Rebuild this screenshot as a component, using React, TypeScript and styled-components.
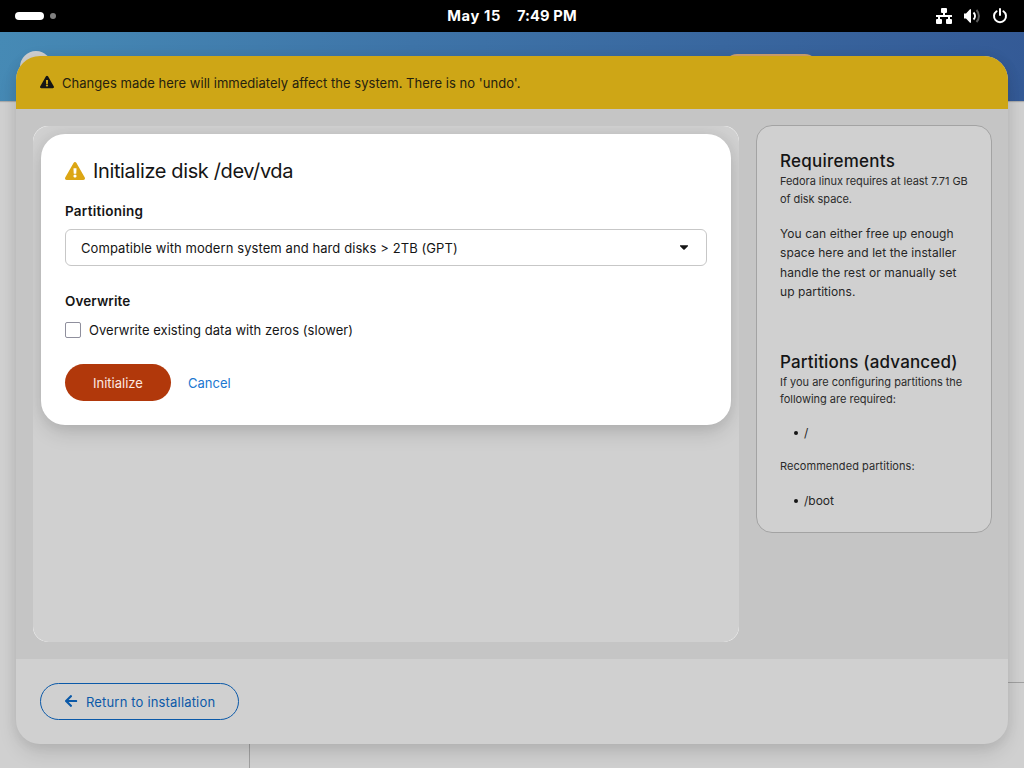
import React from "react";
import styled, { createGlobalStyle } from "styled-components";
import { FaArrowLeft, FaCaretDown, FaExclamationTriangle } from "react-icons/fa";

const GlobalStyle = createGlobalStyle`
  *, *::before, *::after { box-sizing: border-box; }
  body { margin: 0; background: #000; color: #151515; font-family: Inter, "Liberation Sans", sans-serif; font-size: 13px; }
  h1, h2, h3, p, ul { margin: 0; padding: 0; font-weight: 400; }
  button { font: inherit; cursor: pointer; }
  svg { display: block; flex: none; }
`;

const Screen = styled.div`
  width: 1024px;
  height: 768px;
  display: flex;
  flex-direction: column;
  overflow: hidden;
`;

const TopBar = styled.header`
  height: 32px;
  flex: none;
  display: grid;
  grid-template-columns: 1fr auto 1fr;
  align-items: center;
  padding: 0 16px 0 15px;
  background: #000;
  color: #fff;
`;

const Workspaces = styled.div`
  display: flex;
  align-items: center;
  gap: 6px;
`;

const ActiveSpace = styled.span`
  width: 29px;
  height: 8px;
  border-radius: 4px;
  background: #fff;
`;

const IdleSpace = styled.span`
  width: 6px;
  height: 6px;
  border-radius: 50%;
  background: #808080;
`;

const Clock = styled.div`
  display: flex;
  gap: 16px;
  padding: 0 0 1px 1px;
  font-size: 14.7px;
  font-weight: 700;
  white-space: nowrap;
`;

const ClockPart = styled.span<{ $spacing: number }>`
  letter-spacing: ${(p) => p.$spacing}px;
`;

const Tray = styled.div`
  display: flex;
  justify-content: flex-end;
  align-items: center;
  gap: 12px;
`;

const Desktop = styled.div`
  position: relative;
  flex: 1;
  display: flex;
  flex-direction: column;
  background: #d0d0d0;
`;

const AppHeader = styled.div`
  height: 69px;
  flex: none;
  display: flex;
  align-items: flex-start;
  justify-content: space-between;
  padding: 19px 206px 0 20px;
  background: linear-gradient(100deg, #468ab5 0%, #3e74a8 40%, #345a96 100%);
  box-shadow: 0 1px 1px #aaa;
`;

const LogoDisc = styled.div`
  width: 32px;
  height: 32px;
  border-radius: 50%;
  background: #d0d0d0;
`;

const BetaPill = styled.div`
  width: 94px;
  height: 26px;
  margin-top: 3px;
  border-radius: 13px;
  background: #cfa16e;
`;

const Wizard = styled.div`
  flex: 1;
  display: grid;
  grid-template-columns: 250px 1fr;
`;

const WizardNav = styled.div`
  border-right: 1px solid #a0a0a0;
`;

const WizardMain = styled.div`
  display: flex;
  flex-direction: column;
  justify-content: flex-end;
`;

const WizardFooter = styled.div`
  height: 86px;
  border-top: 1px solid #a0a0a0;
`;

const ModalLayer = styled.div`
  position: absolute;
  inset: 0;
  padding: 24px 16px;
  display: flex;
`;

const Modal = styled.section`
  flex: 1;
  display: flex;
  flex-direction: column;
  overflow: hidden;
  border-radius: 24px;
  background: #d0d0d0;
  box-shadow: 0 10px 20px -2px rgba(0, 0, 0, 0.13), 0 0 14px rgba(0, 0, 0, 0.07);
`;

const Banner = styled.div`
  height: 53px;
  flex: none;
  display: flex;
  align-items: center;
  gap: 8px;
  padding: 0 24px;
  background: #cea616;
  svg { margin-bottom: 1px; }
`;

const BannerText = styled.p`
  padding-top: 1px;
  color: #25210f;
  letter-spacing: 0.03px;
  white-space: nowrap;
`;

const ModalBody = styled.div`
  height: 550px;
  display: grid;
  grid-template-columns: 706px 236px;
  gap: 17px;
  align-items: start;
  padding: 16px 16px 0 17px;
  background: #c5c5c5;
`;

const StoragePanel = styled.main`
  height: 516px;
  margin-top: 1px;
  display: flex;
  border-radius: 15px;
  background: #f4f4f4;
  overflow: hidden;
`;

const PanelContent = styled.div`
  flex: 1;
  padding: 8px;
  border-radius: 16px;
  background: #d0d0d0;
`;

const Dialog = styled.section`
  height: 291px;
  display: flex;
  flex-direction: column;
  align-items: stretch;
  padding: 23px 24px 24px;
  border-radius: 24px;
  background: #fff;
  box-shadow: 0 10px 20px -2px rgba(0, 0, 0, 0.13), 0 0 14px rgba(0, 0, 0, 0.08);
`;

const DialogTitle = styled.div`
  height: 28px;
  display: flex;
  align-items: center;
  gap: 8px;
  h1 { font-size: 20px; line-height: 28px; letter-spacing: -0.37px; white-space: nowrap; }
`;

const FieldLabel = styled.div<{ $top: number; $spacing: number }>`
  margin-top: ${(p) => p.$top}px;
  line-height: 20px;
  font-size: 13.5px;
  font-weight: 600;
  letter-spacing: ${(p) => p.$spacing}px;
`;

const Select = styled.button`
  height: 37px;
  flex: none;
  display: flex;
  align-items: center;
  justify-content: space-between;
  margin-top: 8px;
  padding: 0 15px;
  border: 1px solid #c7c7c7;
  border-radius: 6px;
  background: #fff;
  color: #151515;
  letter-spacing: 0.08px;
  svg { margin-bottom: 1px; }
`;

const CheckRow = styled.label`
  display: flex;
  align-items: center;
  gap: 8px;
  height: 20px;
  margin-top: 9px;
  letter-spacing: 0.04px;
  white-space: nowrap;
`;

const CheckBox = styled.input`
  appearance: none;
  width: 16px;
  height: 16px;
  margin: 0;
  border: 1px solid #8f8f9d;
  border-radius: 2px;
  background: #fff;
`;

const Actions = styled.div`
  display: flex;
  gap: 17px;
  margin-top: auto;
`;

const DangerButton = styled.button`
  width: 106px;
  height: 37px;
  padding: 1px 0 0;
  border: 0;
  border-radius: 19px;
  background: #b1380b;
  color: #fce9e2;
`;

const LinkButton = styled.button`
  padding: 1px 0 0;
  border: 0;
  background: none;
  color: #2077d0;
`;

const SideCard = styled.aside`
  height: 408px;
  padding: 23px;
  border: 1px solid #a3a3a3;
  border-radius: 16px;
  background: #d0d0d0;
  white-space: nowrap;
`;

const CardHeading = styled.h2<{ $height: number; $spacing: number }>`
  height: ${(p) => p.$height}px;
  font-size: 17px;
  font-weight: 500;
  line-height: 24px;
  letter-spacing: ${(p) => p.$spacing}px;
`;

const Small = styled.p<{ $line?: number; $spacing?: number }>`
  color: #2b2b2b;
  font-size: 11px;
  line-height: ${(p) => p.$line ?? 17.4}px;
  letter-spacing: ${(p) => p.$spacing ?? -0.02}px;
`;

const Body = styled.p`
  margin: 16px 0 48px;
  color: #262626;
  font-size: 12px;
  line-height: 19.4px;
  letter-spacing: 0.07px;
`;

const PathList = styled.ul`
  margin: 16px 0;
  padding-left: 14px;
  color: #262626;
  list-style: none;
  font-size: 12px;
  line-height: 18px;
`;

const PathItem = styled.li`
  display: flex;
  align-items: center;
  gap: 6px;
  &::before { content: ""; width: 4px; height: 4px; border-radius: 50%; background: #151515; }
`;

const ModalFooter = styled.footer`
  flex: 1;
  padding: 24px;
`;

const OutlineButton = styled.button`
  width: 199px;
  height: 37px;
  display: flex;
  align-items: center;
  gap: 8px;
  padding: 0 23px;
  border: 1px solid #0b59a8;
  border-radius: 19px;
  background: none;
  color: #0b59a8;
  white-space: nowrap;
  svg { margin-bottom: 1px; }
  span { padding-top: 1px; letter-spacing: 0.17px; }
`;

const NetworkIcon = () => (
  <svg width="16" height="16" viewBox="0 0 16 16" fill="#fff">
    <path d="M6 0h4a1 1 0 0 1 1 1v3a1 1 0 0 1-1 1H9v2h7v2h-2v2h1a1 1 0 0 1 1 1v3a1 1 0 0 1-1 1h-4a1 1 0 0 1-1-1v-3a1 1 0 0 1 1-1h1V9H4v2h1a1 1 0 0 1 1 1v3a1 1 0 0 1-1 1H1a1 1 0 0 1-1-1v-3a1 1 0 0 1 1-1h1V9H0V7h7V5H6a1 1 0 0 1-1-1V1a1 1 0 0 1 1-1z" />
  </svg>
);

const VolumeIcon = () => (
  <svg width="16" height="16" viewBox="0 0 16 16" fill="none">
    <path d="M0 5.500h2L6 1.200h1v13.600H6L2 10.500H0z" fill="#fff" />
    <path d="M9.500 4.500c2 2 2 5 0 7" stroke="#fff" strokeWidth="2" />
    <path d="M12.500 2c3.200 3.500 3.200 8.500 0 12" stroke="#5b5b5b" strokeWidth="2" />
  </svg>
);

const PowerIcon = () => (
  <svg width="16" height="16" viewBox="0 0 16 16" fill="none" stroke="#fff" strokeWidth="2" strokeLinecap="round">
    <path d="M4.600 3.200a6 6 0 1 0 6.800 0M8 1v6" />
  </svg>
);

export default function App() {
  return (
    <Screen>
      <GlobalStyle />
      <TopBar>
        <Workspaces><ActiveSpace /><IdleSpace /></Workspaces>
        <Clock>
          <ClockPart $spacing={0.6}>May 15</ClockPart>
          <ClockPart $spacing={0.1}>7:49 PM</ClockPart>
        </Clock>
        <Tray><NetworkIcon /><VolumeIcon /><PowerIcon /></Tray>
      </TopBar>
      <Desktop>
        <AppHeader><LogoDisc /><BetaPill /></AppHeader>
        <Wizard>
          <WizardNav />
          <WizardMain><WizardFooter /></WizardMain>
        </Wizard>
        <ModalLayer>
          <Modal>
            <Banner>
              <FaExclamationTriangle size={14} color="#151515" />
              <BannerText>Changes made here will immediately affect the system. There is no 'undo'.</BannerText>
            </Banner>
            <ModalBody>
              <StoragePanel>
                <PanelContent>
                  <Dialog role="dialog">
                    <DialogTitle>
                      <FaExclamationTriangle size={20} color="#dca614" />
                      <h1>Initialize disk /dev/vda</h1>
                    </DialogTitle>
                    <FieldLabel $top={16} $spacing={0.25}>Partitioning</FieldLabel>
                    <Select>
                      <span>Compatible with modern system and hard disks &gt; 2TB (GPT)</span>
                      <FaCaretDown size={14} />
                    </Select>
                    <FieldLabel $top={25} $spacing={0.1}>Overwrite</FieldLabel>
                    <CheckRow>
                      <CheckBox type="checkbox" />
                      <span>Overwrite existing data with zeros (slower)</span>
                    </CheckRow>
                    <Actions>
                      <DangerButton>Initialize</DangerButton>
                      <LinkButton>Cancel</LinkButton>
                    </Actions>
                  </Dialog>
                </PanelContent>
              </StoragePanel>
              <SideCard>
                <CardHeading $height={23} $spacing={0.25}>Requirements</CardHeading>
                <Small $line={18} $spacing={-0.06}>Fedora linux requires at least 7.71 GB<br />of disk space.</Small>
                <Body>You can either free up enough<br />space here and let the installer<br />handle the rest or manually set<br />up partitions.</Body>
                <CardHeading $height={24} $spacing={0.15}>Partitions (advanced)</CardHeading>
                <Small>If you are configuring partitions the<br />following are required:</Small>
                <PathList><PathItem>/</PathItem></PathList>
                <Small $spacing={0.06}>Recommended partitions:</Small>
                <PathList><PathItem>/boot</PathItem></PathList>
              </SideCard>
            </ModalBody>
            <ModalFooter>
              <OutlineButton><FaArrowLeft size={14} /><span>Return to installation</span></OutlineButton>
            </ModalFooter>
          </Modal>
        </ModalLayer>
      </Desktop>
    </Screen>
  );
}
